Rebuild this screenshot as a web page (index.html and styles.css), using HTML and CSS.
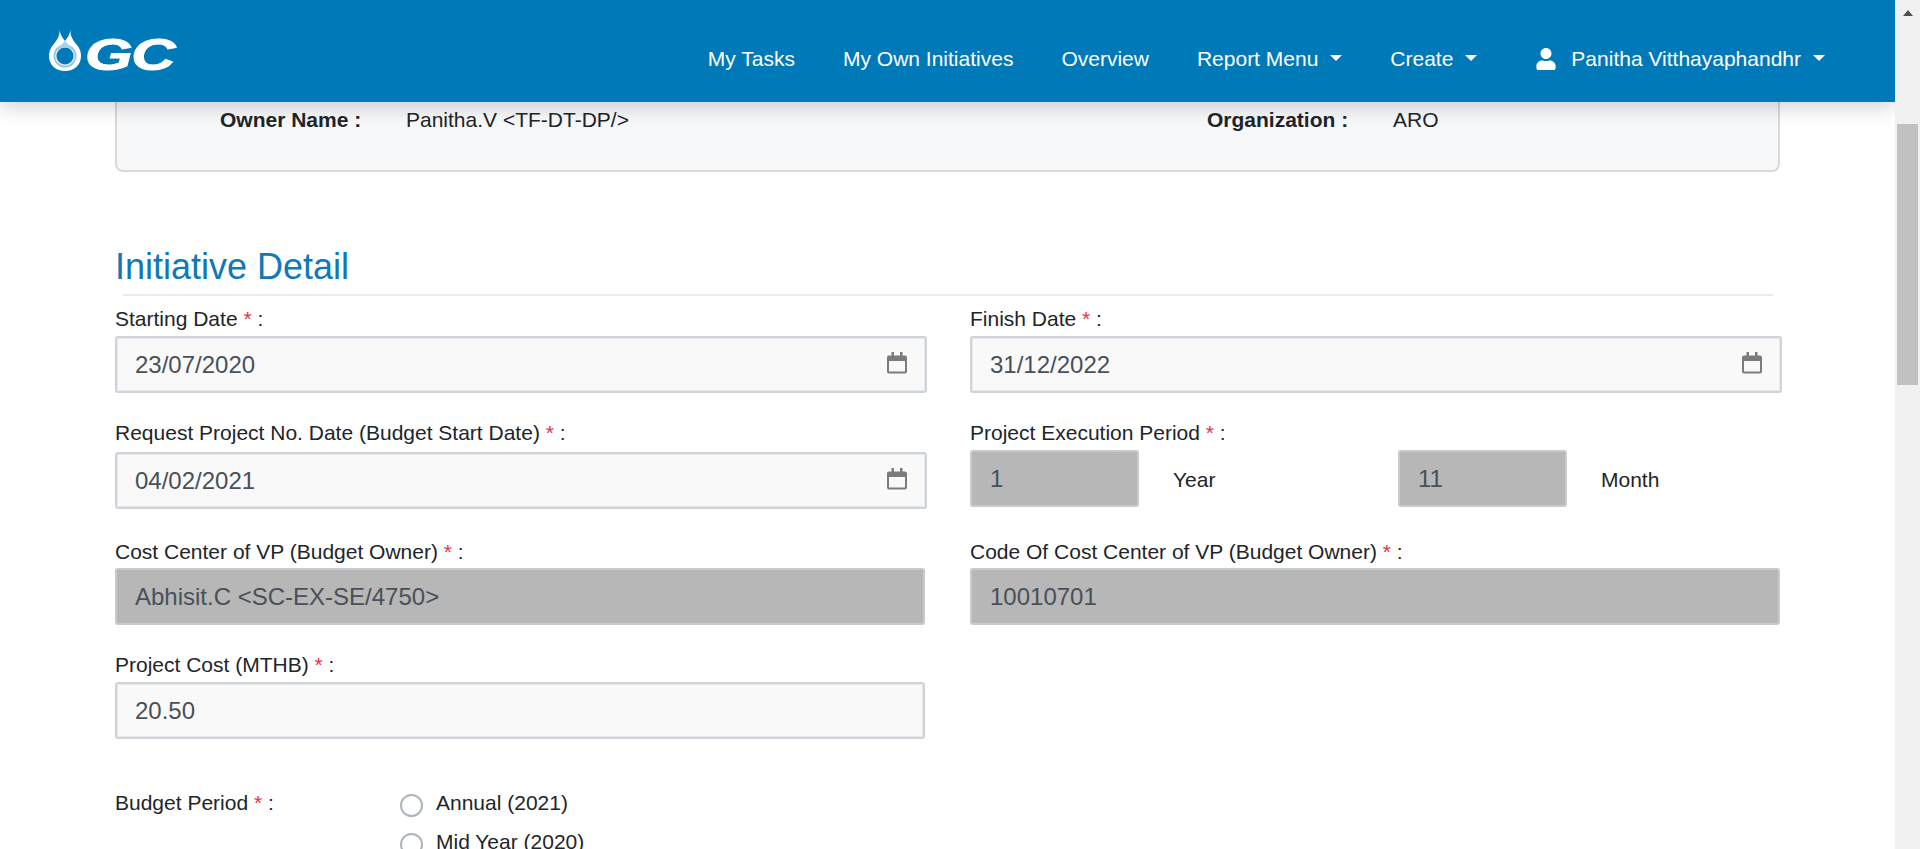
FILE: index.html
```html
<!DOCTYPE html>
<html lang="en">
<head>
<meta charset="utf-8">
<title>Initiative Detail</title>
<link rel="stylesheet" href="styles.css">
</head>
<body>
<div class="app">
  <div class="main">
    <header class="navbar">
      <a class="brand">
        <svg class="drop" viewBox="0 0 32 42" width="32" height="42">
          <path d="M10.5 0C11 6 8 10 4 15C1 19 0 22 0 26C0 35 7 41 16 41C25 41 32 35 32 26C32 22 31 19 28 15C24 10 21 6 21.500 0C20.500 5 18.500 8 16 11C13.500 8 11.500 5 10.500 0Z" fill="#fff"/>
          <circle cx="16" cy="26" r="11.500" fill="#8fc4e0"/>
          <circle cx="16" cy="26" r="10" fill="#dcecf5"/>
          <circle cx="16" cy="26" r="8.500" fill="#0079b8"/>
          <path d="M16 11C13 14 9 18 7 23C9 19 12.500 17.500 16 17.500C19.500 17.500 23 19 25 23C23 18 19 14 16 11Z" fill="#a9d2e8"/>
        </svg>
        <span class="brand-text">GC</span>
      </a>
      <nav class="nav-links">
        <a class="nav-item">My Tasks</a>
        <a class="nav-item">My Own Initiatives</a>
        <a class="nav-item">Overview</a>
        <a class="nav-item caret">Report Menu</a>
        <a class="nav-item caret">Create</a>
        <a class="nav-item caret user">
          <svg class="user-icon" viewBox="0 0 448 512" width="20" height="22"><path fill="#fff" d="M224 256c70.700 0 128-57.300 128-128S294.700 0 224 0 96 57.300 96 128s57.300 128 128 128zm89.600 32h-16.700c-22.200 10.200-46.900 16-72.900 16s-50.600-5.800-72.900-16h-16.700C60.200 288 0 348.200 0 422.400V464c0 26.500 21.500 48 48 48h352c26.500 0 48-21.500 48-48v-41.600c0-74.200-60.200-134.400-134.400-134.400z"/></svg>
          Panitha Vitthayaphandhr
        </a>
      </nav>
    </header>

    <main class="content">
      <section class="owner-card">
        <div class="owner-cell">
          <span class="owner-key">Owner Name :</span>
          <span class="owner-val">Panitha.V &lt;TF-DT-DP/&gt;</span>
        </div>
        <div class="owner-cell">
          <span class="owner-key">Organization :</span>
          <span class="owner-val">ARO</span>
        </div>
      </section>

      <h2 class="section-title">Initiative Detail</h2>
      <hr class="section-rule">

      <div class="row row-1">
        <div class="col">
          <label class="lbl lbl-gap5">Starting Date <em>*</em> :</label>
          <div class="field date"><span>23/07/2020</span>
            <svg class="cal" viewBox="0 0 20 22" width="20" height="22"><path fill="none" stroke="#7b7b7b" stroke-width="2" d="M2 4.500h16a1 1 0 0 1 1 1v14a1 1 0 0 1-1 1H2a1 1 0 0 1-1-1v-14a1 1 0 0 1 1-1z"/><path fill="#7b7b7b" d="M1 4h18v5H1zM4.500 0h2.500v5H4.500zM13 0h2.500v5H13z"/></svg>
          </div>
        </div>
        <div class="col">
          <label class="lbl lbl-gap5">Finish Date <em>*</em> :</label>
          <div class="field date"><span>31/12/2022</span>
            <svg class="cal" viewBox="0 0 20 22" width="20" height="22"><path fill="none" stroke="#7b7b7b" stroke-width="2" d="M2 4.500h16a1 1 0 0 1 1 1v14a1 1 0 0 1-1 1H2a1 1 0 0 1-1-1v-14a1 1 0 0 1 1-1z"/><path fill="#7b7b7b" d="M1 4h18v5H1zM4.500 0h2.500v5H4.500zM13 0h2.500v5H13z"/></svg>
          </div>
        </div>
      </div>

      <div class="row row-2">
        <div class="col">
          <label class="lbl lbl-gap8">Request Project No. Date (Budget Start Date) <em>*</em> :</label>
          <div class="field date"><span>04/02/2021</span>
            <svg class="cal" viewBox="0 0 20 22" width="20" height="22"><path fill="none" stroke="#7b7b7b" stroke-width="2" d="M2 4.500h16a1 1 0 0 1 1 1v14a1 1 0 0 1-1 1H2a1 1 0 0 1-1-1v-14a1 1 0 0 1 1-1z"/><path fill="#7b7b7b" d="M1 4h18v5H1zM4.500 0h2.500v5H4.500zM13 0h2.500v5H13z"/></svg>
          </div>
        </div>
        <div class="col">
          <label class="lbl lbl-gap5">Project Execution Period <em>*</em> :</label>
          <div class="period">
            <div class="period-part">
              <div class="field disabled short"><span>1</span></div>
              <span class="unit">Year</span>
            </div>
            <div class="period-part">
              <div class="field disabled short"><span>11</span></div>
              <span class="unit">Month</span>
            </div>
          </div>
        </div>
      </div>

      <div class="row row-3">
        <div class="col">
          <label class="lbl lbl-gap4">Cost Center of VP (Budget Owner) <em>*</em> :</label>
          <div class="field disabled narrow"><span>Abhisit.C &lt;SC-EX-SE/4750&gt;</span></div>
        </div>
        <div class="col">
          <label class="lbl lbl-gap4">Code Of Cost Center of VP (Budget Owner) <em>*</em> :</label>
          <div class="field disabled narrow"><span>10010701</span></div>
        </div>
      </div>

      <div class="row row-4">
        <div class="col">
          <label class="lbl lbl-gap5">Project Cost (MTHB) <em>*</em> :</label>
          <div class="field narrow"><span>20.50</span></div>
        </div>
      </div>

      <div class="budget">
        <label class="lbl budget-lbl">Budget Period <em>*</em> :</label>
        <div class="radios">
          <div class="radio"><i class="dot"></i><span>Annual (2021)</span></div>
          <div class="radio"><i class="dot"></i><span>Mid Year (2020)</span></div>
        </div>
      </div>
    </main>
  </div>

  <aside class="scrollbar">
    <div class="arrow"></div>
    <div class="thumb"></div>
  </aside>
</div>
</body>
</html>
```
FILE: styles.css
```css
* { box-sizing: border-box; }
html, body { margin: 0; height: 100%; overflow: hidden; }
body {
  font-family: "Liberation Sans", Arial, sans-serif;
  color: #212529;
  background: #fff;
}
.app { display: flex; height: 849px; overflow: hidden; }
.main { flex: 1 1 auto; min-width: 0; display: flex; flex-direction: column; overflow: hidden; }

/* navbar */
.navbar {
  position: relative;
  z-index: 2;
  flex: 0 0 102px;
  display: flex;
  align-items: center;
  background: #0079b8;
  box-shadow: 0 4px 20px rgba(0,0,0,.2);
  padding: 0 70px 0 49px;
  color: #fff;
}
.brand { display: flex; align-items: center; }
.drop { display: block; }
.brand-text {
  display: block;
  margin-left: 4px;
  padding-top: 7px;
  width: 87px;
  font-size: 45px;
  line-height: 42px;
  font-weight: 700;
  font-style: italic;
  color: #fff;
  -webkit-text-stroke: 1px #fff;
  transform: scaleX(1.36);
  transform-origin: left center;
  letter-spacing: -1px;
}
.nav-links { margin-left: auto; display: flex; align-items: center; font-size: 21px; padding-top: 16px; }
.nav-item { display: flex; align-items: center; margin-left: 48px; white-space: nowrap; }
.nav-item.caret::after {
  content: "";
  margin-left: 12px;
  margin-top: -3px;
  border-top: 6px solid #fff;
  border-left: 6.500px solid transparent;
  border-right: 6.500px solid transparent;
}
.nav-item.user { margin-left: 59px; }
.user-icon { margin-right: 15px; }

/* content */
.content { flex: 1 1 auto; padding: 0 0 0 115px; overflow: hidden; }

.owner-card {
  width: 1665px;
  height: 70px;
  display: flex;
  padding: 6px 0 0 103px;
  background: #f7f8fa;
  border: 2px solid #d9d9d9;
  border-top: 0;
  border-radius: 0 0 8px 8px;
  font-size: 21px;
}
.owner-cell { display: flex; flex: 0 0 987px; line-height: 24px; }
.owner-key { flex: 0 0 186px; font-weight: 700; }

.section-title {
  margin: 73px 0 0;
  font-size: 36px;
  line-height: 44px;
  font-weight: 400;
  color: #0f78b8;
}
.section-rule {
  margin: 5px 0 0 8px;
  width: 1650px;
  height: 2px;
  border: 0;
  background: #e9ecef;
}

/* rows */
.row { display: grid; grid-template-columns: 855px 812px; }
.row-1 { margin-top: 11px; }
.row-2 { margin-top: 28px; }
.row-3 { margin-top: 31px; }
.row-4 { margin-top: 28px; }

.lbl { display: block; font-size: 21px; line-height: 24px; margin-bottom: 6px; color: #212529; }
.lbl em { font-style: normal; color: #e8323c; }
.lbl-gap8 { margin-bottom: 7px; }
.lbl-gap5 { margin-bottom: 5px; }
.lbl-gap4 { margin-bottom: 4px; }

.field {
  display: flex;
  align-items: center;
  justify-content: space-between;
  height: 57px;
  padding: 0 18px;
  background: #f9f9f9;
  border: 2px solid #ced4da;
  box-shadow: inset 0 0 0 1px #e6e8ea;
  border-radius: 3px;
  font-size: 24px;
  color: #495057;
}
.field.date { width: 812px; }
.field.narrow { width: 810px; }
.field.disabled { background: #b7b7b7; border-color: #c6cbd0; box-shadow: none; }
.field.short { flex: 0 0 169px; width: 169px; }
.cal { display: block; margin-top: -3px; }

.period { display: flex; }
.period-part { display: flex; align-items: center; flex: 0 0 428px; }
.unit { margin-left: 34px; font-size: 21px; line-height: 24px; padding-top: 3px; }

.budget { display: flex; margin-top: 52px; }
.budget-lbl { flex: 0 0 285px; margin: 0; }
.radios { margin-top: -5px; }
.radio { display: flex; align-items: center; font-size: 21px; line-height: 24px; height: 39px; }
.radio span { margin-top: -6px; }
.dot {
  display: block;
  width: 23px;
  height: 23px;
  margin-right: 13px;
  background: #fff;
  border: 2px solid #adb5bd;
  border-radius: 50%;
}

/* scrollbar */
.scrollbar { flex: 0 0 25px; background: #f1f1f1; position: relative; padding: 0 2px; }
.arrow {
  margin: 10px auto 0;
  width: 0;
  border-bottom: 6px solid #505050;
  border-left: 5.500px solid transparent;
  border-right: 5.500px solid transparent;
}
.thumb { margin-top: 108px; height: 261px; background: #c1c1c1; }
```
